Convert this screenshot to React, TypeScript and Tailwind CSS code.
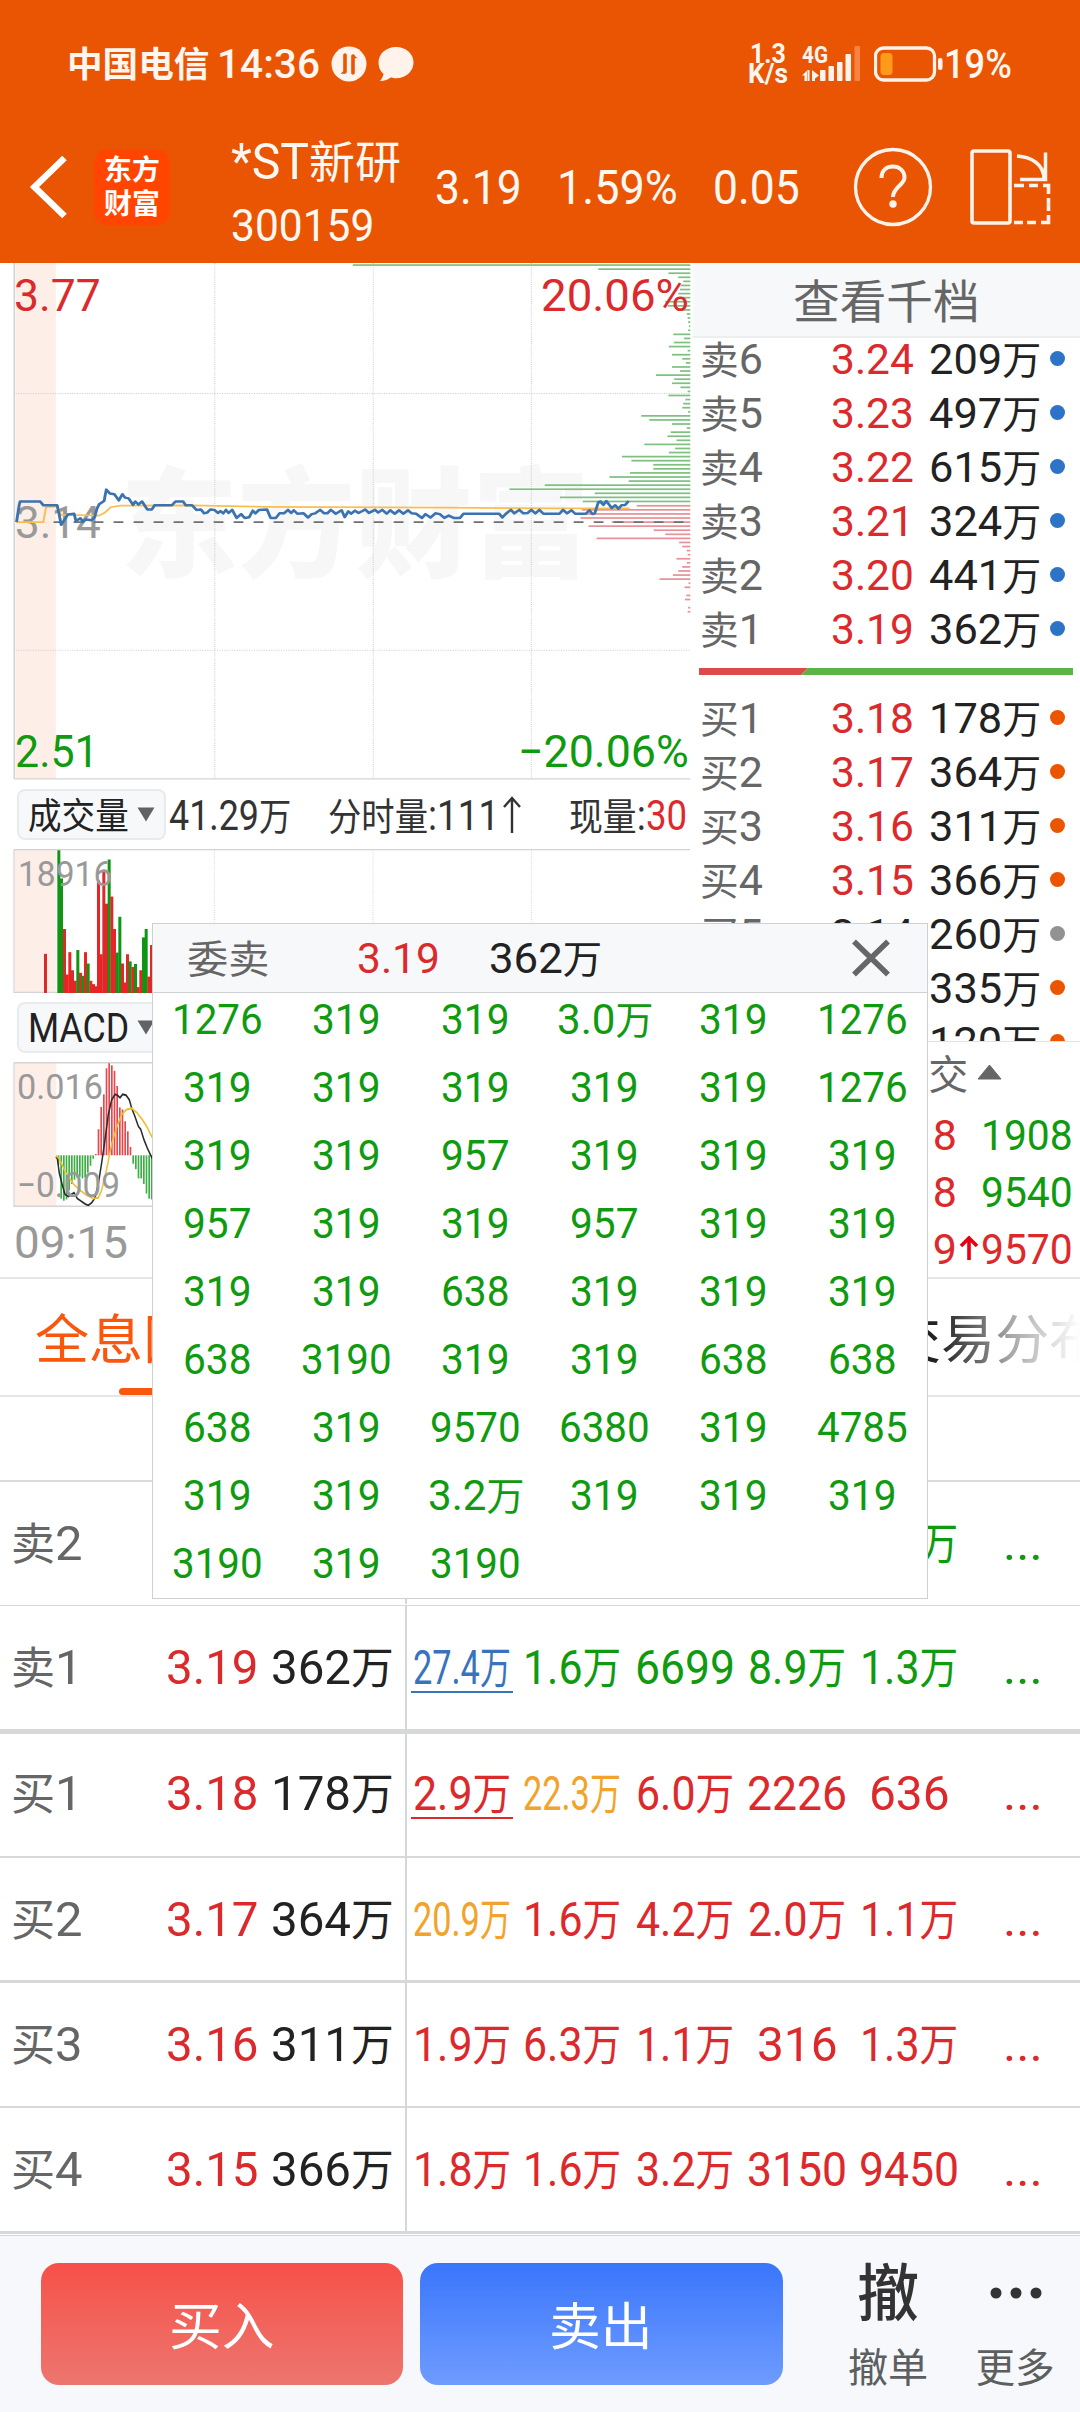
import React, { useLayoutEffect, useRef, useState } from "react";

/** Single-line text squeezed or stretched horizontally to fill exactly `w` pixels. */
function Fit({ w, text, className = "" }: { w: number; text: string; className?: string }) {
  const ref = useRef<HTMLSpanElement>(null);
  const [k, setK] = useState(1);
  useLayoutEffect(() => {
    const n = ref.current ? ref.current.offsetWidth : 0;
    if (n) setK(w / n);
  }, [w, text]);
  const parts = text.split(/([\u4e00-\u9fff]+)/).filter(Boolean);
  return (
    <span className={"inline-flex shrink-0 whitespace-nowrap " + className} style={{ width: w }}>
      <span ref={ref} className="inline-block shrink-0 origin-left" style={{ transform: `scaleX(${k})` }}>
        {parts.map((p, i) =>
          /[\u4e00-\u9fff]/.test(p) ? (
            <span key={i} className="text-[0.9em] leading-none">
              {p}
            </span>
          ) : (
            <span key={i}>{p}</span>
          )
        )}
      </span>
    </span>
  );
}

const RED = "text-[#dc2a2c]";
const GREEN = "text-[#0f9a10]";
const BLUE = "text-[#3873bd]";
const GOLD = "text-[#f2a32c]";
const INK = "text-[#222222]";
const GREY = "text-[#666666]";

function StatusBar() {
  return (
    <div className="flex h-[110px] items-center pt-[17px] pl-[67px] text-[#fff6f0]">
      <Fit w={142} text="中国电信" className="text-[39px] leading-[40px] font-bold" />
      <Fit w={103} text="14:36" className="ml-[8px] text-[41px] leading-[40px] font-medium" />
      <svg className="ml-[11px] h-[36px] w-[36px]" viewBox="0 0 36 36">
        <circle cx="18" cy="18" r="17.500" fill="#fff3ec" />
        <path d="M14 9v17M22 27V10" fill="none" stroke="#e95502" strokeWidth="3.600" strokeLinecap="round" />
        <path d="M14 27.800H9.500l4.500-4zM22 8.200l4.500 4H22z" fill="#e95502" />
      </svg>
      <svg className="ml-[11px] h-[36px] w-[36px]" viewBox="0 0 36 36">
        <path d="M18 1C8 1 .5 8 .5 16.500c0 5 2 9 5 11.500-.5 3-2 5-3.500 7 5 0 8-1.500 10.500-3.500 2 .6 3.500.8 5.500.8 10 0 17.500-7 17.500-15.800S28 1 18 1z" fill="#fff3ec" />
      </svg>
      <div className="ml-[333px] flex w-[42px] flex-col items-center text-[27px] leading-[20px] font-bold">
        <Fit w={36} text="1.3" />
        <Fit w={40} text="K/s" />
      </div>
      <svg className="ml-[13px] h-[40px] w-[60px]" viewBox="0 0 60 40">
        <text x="0" y="19" fontFamily="Roboto" fontWeight="700" fontSize="23" textLength="26" lengthAdjust="spacingAndGlyphs" fill="#fff3ec">
          4G
        </text>
        <path d="M0 31.500l5.500-5.500v11h-3v-5.500zM5 26v11h2.500v-11zM10 26l7 5.500-4 3V37h-3z" fill="#fff3ec" />
        <g fill="#fff3ec">
          <rect x="18" y="26" width="5.500" height="11" rx="1" />
          <rect x="26.500" y="22" width="5.500" height="15" rx="1" />
          <rect x="35" y="18" width="5.500" height="19" rx="1" />
          <rect x="43.500" y="10" width="5.500" height="27" rx="1" />
        </g>
        <rect x="52.500" y="2" width="5.500" height="35" rx="1" fill="#f58442" />
      </svg>
      <svg className="ml-[12px] h-[36px] w-[70px]" viewBox="0 0 70 36">
        <rect x="1.500" y="2" width="59" height="32" rx="8" fill="none" stroke="#fff3ec" strokeWidth="3.300" />
        <rect x="6.500" y="7" width="12" height="22" rx="3.500" fill="#ff9a1b" />
        <rect x="64" y="12" width="4.500" height="12" rx="2" fill="#fff3ec" />
      </svg>
      <Fit w={68} text="19%" className="text-[41px] leading-[40px] font-medium" />
    </div>
  );
}

function Header() {
  return (
    <header className="h-[263px] bg-[#e95502]">
      <StatusBar />
      <div className="flex h-[153px] items-center text-[#fff8f2]">
        <svg className="ml-[28px] h-[66px] w-[40px]" viewBox="0 0 40 66">
          <path d="M36.500 4L6.500 33l30 29" fill="none" stroke="#fff" strokeWidth="6.500" />
        </svg>
        <div className="ml-[26px] flex h-[76px] w-[76px] flex-col items-center justify-center rounded-[14px] bg-[#ff4500] text-[31px] leading-[34px] font-bold text-white">
          <Fit w={56} text="东方" />
          <Fit w={56} text="财富" />
        </div>
        <div className="ml-[61px] flex w-[190px] flex-col pt-[13px]">
          <div className="flex h-[60px] items-center pt-[8px]">
            <Fit w={78} text="*ST" className="text-[50px] leading-[60px]" />
            <Fit w={92} text="新研" className="text-[50px] leading-[60px]" />
          </div>
          <Fit w={143} text="300159" className="mt-[6px] text-[44px] leading-[64px]" />
        </div>
        <Fit w={87} text="3.19" className="ml-[14px] pt-[2px] text-[48px] leading-[60px]" />
        <Fit w={121} text="1.59%" className="ml-[35px] pt-[2px] text-[48px] leading-[60px]" />
        <Fit w={87} text="0.05" className="ml-[35px] pt-[2px] text-[48px] leading-[60px]" />
        <svg className="ml-[53px] h-[80px] w-[80px]" viewBox="0 0 80 80">
          <circle cx="40" cy="40" r="37.500" fill="none" stroke="#fff3ec" strokeWidth="3.300" />
          <path d="M28.500 31C28.500 23 34 19.500 40 19.500S51.500 23.500 51.500 30.500C51.500 38 40 40 40 50" fill="none" stroke="#fff3ec" strokeWidth="4" />
          <circle cx="40" cy="57" r="3.700" fill="#fff3ec" />
        </svg>
        <svg className="ml-[36px] h-[78px] w-[84px]" viewBox="0 0 84 78" fill="none" stroke="#fff3ec">
          <rect x="3" y="3" width="38" height="72" rx="2" strokeWidth="3.600" />
          <path d="M48 8c14 1 27 8 27 23" strokeWidth="3.500" />
          <path d="M76.500 4.500V31.500H51" strokeWidth="3.500" />
          <path d="M45 37.500h10M60 37.500h9M74 37.500h5.500V46M79.500 50v13M79.500 67v7.500H72M67 74.500h-9M54 74.500H45" strokeWidth="3.600" />
        </svg>
      </div>
    </header>
  );
}

const ASK_DEPTH = [
  790, 1340, 1497, 1519, 1530, 1525, 1523, 1519, 1525, 1490, 1495, 1527, 1538, 1540, 1541, 1543, 1541, 1508, 1532, 1509, 1498, 1540,
  1505, 1528, 1536, 1505, 1523, 1469, 1510, 1505, 1524, 1540, 1497, 1535, 1530, 1528, 1541, 1436, 1454, 1505, 1538, 1502, 1495, 1515,
  1443, 1512, 1498, 1393, 1414, 1463, 1463, 1411, 1365, 1408, 1220, 1141, 1332, 1254, 1305,
];
const BID_DEPTH = [
  1426, 1303, 1302, 1300, 1370, 1318, 1464, 1490, 1336, 1521, 1528, 1538, 1540, 1515, 1538, 1528, 1519, 1507, 1477, 1542, 1533, 1546,
  1537, 1534, 1546, 1541, 1540,
];
const PRICE_LINE =
  "37,685 43,640 45,631 90,631 97,641 128,641 132,662 137,692 145,678 152,665 166,663 170,682 180,675 186,684 192,678 205,680 212,672 217,650 222,638 233,630 238,600 246,610 256,612 266,628 274,612 280,621 288,623 298,640 303,631 310,639 318,631 330,652 340,652 346,641 385,641 393,631 410,631 416,641 430,641 440,653 450,652 457,662 464,660 471,652 480,653 488,661 494,656 500,662 506,653 512,661 520,653 530,674 540,664 548,674 558,672 566,655 572,662 580,653 598,652 606,674 618,674 626,662 636,662 645,653 652,661 658,654 666,663 680,662 690,673 698,664 706,662 717,653 726,662 733,662 741,653 752,663 765,654 772,672 780,657 786,663 795,655 803,661 818,652 826,661 840,653 847,660 856,653 866,663 874,654 884,663 894,654 903,663 914,654 922,662 932,663 945,674 953,664 964,673 975,662 985,664 995,674 1005,668 1016,674 1030,674 1038,663 1118,663 1125,673 1133,663 1144,653 1152,662 1163,653 1172,662 1182,661 1190,653 1199,662 1208,653 1217,663 1253,663 1261,653 1270,662 1280,654 1288,663 1312,663 1320,654 1327,664 1332,662 1340,633 1345,631 1351,640 1358,630 1370,648 1378,641 1385,650 1392,641 1400,640 1408,630";

function PriceChart() {
  return (
    <div className="relative h-[517px] w-[693px] text-[45px] leading-[48px]">
      <div className="absolute top-[193px] left-[120px] flex">
        <Fit w={470} text="东方财富" className="text-[133px] leading-[133px] font-black text-[#f7f7f8]" />
      </div>
      <svg className="absolute inset-0 h-full w-[693px]" viewBox="0 7.840 1552 1351" preserveAspectRatio="none">
        <rect x="35" y="8" width="90" height="1348" fill="#fdeee8" />
        <path d="M32 8V1356M32 1356H1546" stroke="#d3d3d5" strokeWidth="3.500" fill="none" />
        <path d="M481 8V1356M836 8V1356M1190 8V1356M35 349H1546M35 1020H1546" stroke="#cfcfcf" strokeWidth="2.500" strokeDasharray="2.500 3" fill="none" />
      </svg>
      <Fit w={86} text="3.14" className="absolute top-[236px] left-[15px] text-[#999999]" />
      <svg className="absolute inset-0 h-full w-[693px]" viewBox="0 7.840 1552 1351" preserveAspectRatio="none">
        {ASK_DEPTH.map((x, i) => (
          <rect key={i} x={x} y={11 + i * 10.650} width={1546 - x} height="4.500" fill="#7fc080" />
        ))}
        {BID_DEPTH.map((x, i) => (
          <rect key={i} x={x} y={640 + i * 10.650} width={1546 - x} height="4.500" fill="#e59298" />
        ))}
        <path d="M120 685H1546" stroke="#707073" strokeWidth="4" strokeDasharray="22 22.800" />
        <polyline points="37,685 97,685 103,646 128,644 137,666 200,667 222,668 235,660 248,646 270,642 430,641 600,645 1000,647 1250,649 1410,649" fill="none" stroke="#f7bf52" strokeWidth="4.500" />
        <polyline points={PRICE_LINE} fill="none" stroke="#3b72b0" strokeWidth="6.500" strokeLinejoin="round" />
      </svg>
      <Fit w={87} text="3.77" className={"absolute top-[9px] left-[14px] " + RED} />
      <Fit w={148} text="20.06%" className={"absolute top-[9px] left-[541px] " + RED} />
      <Fit w={84} text="2.51" className={"absolute top-[465px] left-[15px] " + GREEN} />
      <Fit w={171} text="−20.06%" className={"absolute top-[465px] left-[518px] " + GREEN} />
    </div>
  );
}

function IndicatorButton({ text, w }: { text: string; w: number }) {
  return (
    <div className="flex h-[51px] w-[149px] shrink-0 items-center rounded-[8px] border-2 border-[#e8eaee] bg-[#f7f8fa] text-[#222222]">
      <Fit w={w} text={text} className="ml-[9px] text-[41px] leading-[46px]" />
      <svg className="ml-[8px] h-[15px] w-[18px]" viewBox="0 0 18 15">
        <path d="M.5 .5h17L9 14.500z" fill="#606266" />
      </svg>
    </div>
  );
}

const VOLUME: [number, number, 0 | 1][] = [
  [132, 436, 1], [172, 190, 0], [180, 257, 0], [189, 377, 1], [197, 485, 1], [205, 432, 1], [213, 475, 1], [221, 500, 1],
  [229, 427, 0], [237, 481, 1], [245, 488, 0], [252, 432, 1], [260, 459, 0], [268, 500, 1], [276, 508, 1], [284, 513, 1],
  [291, 262, 1], [299, 437, 1], [307, 240, 1], [315, 317, 1], [323, 212, 0], [331, 300, 1], [339, 377, 1], [347, 433, 0],
  [355, 348, 0], [363, 459, 1], [370, 504, 1], [378, 437, 1], [386, 454, 0], [394, 467, 1], [402, 460, 0], [410, 515, 1],
  [418, 475, 1], [426, 397, 0], [434, 377, 0], [442, 490, 1], [450, 415, 1],
];

function VolumeChart() {
  return (
    <div className="relative h-[144px] w-[693px] text-[35px] leading-[40px]">
      <svg className="absolute inset-0 h-full w-[693px]" viewBox="0 187 2079 342" preserveAspectRatio="none">
        <rect x="44" y="188" width="125" height="340" fill="#fdeee8" />
        <path d="M42 188H2070M42 188V528H2070" stroke="#d3d3d5" strokeWidth="3.500" fill="none" />
        <path d="M643 188V528M1119 188V528M1594 188V528" stroke="#cfcfcf" strokeWidth="2.500" strokeDasharray="2.500 3" />
        {VOLUME.map(([x, y, up], i) => (
          <rect key={i} x={x} y={y} width="9" height={529 - y} fill={up ? (i % 3 ? "#ea2424" : "#d92b2b") : "#0f9414"} />
        ))}
      </svg>
      <Fit w={94} text="18916" className="absolute top-[6px] left-[18px] text-[#999999]" />
    </div>
  );
}

const MACD_BARS: [number, number][] = [
  [173, 940], [181, 1020], [189, 1025], [197, 1022], [205, 1000], [213, 985], [221, 975], [229, 970], [237, 968], [245, 972],
  [253, 970], [261, 958], [269, 942], [277, 925], [285, 914], [293, 855], [301, 802], [309, 772], [317, 710], [325, 698],
  [333, 703], [341, 716], [349, 752], [357, 803], [365, 808], [373, 836], [381, 860], [389, 897], [397, 937], [405, 950],
  [413, 972], [421, 972], [429, 985], [437, 1008], [445, 1020], [453, 1022],
];

function MacdChart() {
  return (
    <div className="relative h-[145px] w-[693px] text-[35px] leading-[40px]">
      <svg className="absolute inset-0 h-full w-[693px]" viewBox="0 695 2079 345" preserveAspectRatio="none">
        <rect x="44" y="697" width="125" height="341" fill="#fdeee8" />
        <path d="M42 697H2070M42 697V1038H2070" stroke="#d3d3d5" strokeWidth="3.500" fill="none" />
        {MACD_BARS.map(([x, y], i) => (
          <rect key={i} x={x} y={Math.min(y, 917)} width="5" height={Math.abs(917 - y)} fill={y < 917 ? "#e5484c" : "#3bb143"} />
        ))}
        <polyline points="168,920 172,925 178,960 186,985 195,1010 205,1015 222,1006 232,1020 245,1027 256,1033 265,1036 275,1030 285,1018 295,985 305,935 315,880 325,820 335,785 345,772 352,774 360,780 368,772 378,774 388,785 395,805 405,825 415,848 422,855 432,880 442,900 457,925" fill="none" stroke="#2c2c30" strokeWidth="4.500" />
        <polyline points="168,918 178,925 195,955 220,985 240,1000 260,1012 280,1020 295,1018 305,1000 320,950 335,890 350,850 365,820 380,808 395,805 410,815 425,830 440,848 457,875" fill="none" stroke="#eec02c" strokeWidth="4.500" />
      </svg>
      <Fit w={86} text="0.016" className="absolute top-[6px] left-[17px] text-[#999999]" />
      <Fit w={103} text="−0.009" className="absolute top-[104px] left-[17px] text-[#999999]" />
    </div>
  );
}

function Charts() {
  return (
    <section className="h-[1014px] w-[693px]">
      <PriceChart />
      <div className="flex h-[69px] items-center pl-[17px] text-[42px] leading-[50px] text-[#333333]">
        <IndicatorButton text="成交量" w={101} />
        <Fit w={122} text="41.29万" className="ml-[3px] pt-[2px]" />
        <Fit w={171} text="分时量:111" className="ml-[37px] pt-[2px]" />
        <svg className="ml-[3px] h-[40px] w-[20px]" viewBox="0 0 20 40">
          <path d="M10 38V3M2 12L10 3l8 9" fill="none" stroke="#333333" strokeWidth="2.400" />
        </svg>
        <Fit w={77} text="现量:" className="ml-[47px] pt-[2px]" />
        <Fit w={41} text="30" className={"pt-[2px] " + RED} />
      </div>
      <VolumeChart />
      <div className="flex h-[69px] items-center pl-[17px]">
        <IndicatorButton text="MACD" w={101} />
      </div>
      <MacdChart />
      <div className="flex h-[70px] items-center pt-[2px] pl-[14px]">
        <Fit w={114} text="09:15" className="text-[45px] leading-[50px] text-[#999999]" />
      </div>
    </section>
  );
}

type Quote = [string, string, string, "blue" | "orange" | "grey"];
const ASKS: Quote[] = [
  ["卖6", "3.24", "209万", "blue"],
  ["卖5", "3.23", "497万", "blue"],
  ["卖4", "3.22", "615万", "blue"],
  ["卖3", "3.21", "324万", "blue"],
  ["卖2", "3.20", "441万", "blue"],
  ["卖1", "3.19", "362万", "blue"],
];
const BIDS: Quote[] = [
  ["买1", "3.18", "178万", "orange"],
  ["买2", "3.17", "364万", "orange"],
  ["买3", "3.16", "311万", "orange"],
  ["买4", "3.15", "366万", "orange"],
  ["买5", "3.14", "260万", "grey"],
  ["买6", "3.13", "335万", "orange"],
  ["买7", "3.12", "120万", "orange"],
];
const DOTS = { blue: "bg-[#2e74c6]", orange: "bg-[#eb5500]", grey: "bg-[#929292]" };

function QuoteRow({ q }: { q: Quote }) {
  return (
    <div className="flex h-[54px] shrink-0 items-center pl-[7px] text-[43px] leading-[54px]">
      <Fit w={63} text={q[0]} className={GREY} />
      <Fit w={83} text={q[1]} className={"ml-[68px] " + (q[3] === "grey" ? INK : RED)} />
      <Fit w={112} text={q[2]} className={"ml-[15px] " + INK} />
      <span className={"mb-[2px] ml-[9px] h-[15px] w-[15px] rounded-full " + DOTS[q[3]]} />
    </div>
  );
}

function OrderBook() {
  const ticks = [
    ["3.18", "1908", false],
    ["3.18", "9540", false],
    ["3.19", "9570", true],
  ] as const;
  return (
    <section className="flex h-[1014px] w-[387px] flex-col">
      <div className="flex h-[75px] shrink-0 items-center justify-center border-b-2 border-[#eceef0] bg-[#f6f8fa] pt-[3px]">
        <Fit w={187} text="查看千档" className={"text-[51px] leading-[60px] " + GREY} />
      </div>
      <div className="flex h-[703px] shrink-0 flex-col overflow-hidden">
        <div className="mt-[-6px] flex flex-col">
          {ASKS.map((q) => (
            <QuoteRow key={q[0]} q={q} />
          ))}
        </div>
        <svg className="mt-[12px] mb-[16px] ml-[6px] h-[7px] w-[374px] shrink-0" viewBox="0 0 374 7">
          <path d="M0 0H109L102 7H0z" fill="#dc4a4a" />
          <path d="M109 0H374V7H102z" fill="#5bb447" />
        </svg>
        {BIDS.map((q) => (
          <QuoteRow key={q[0]} q={q} />
        ))}
      </div>
      <div className="flex h-[65px] shrink-0 items-center border-t border-[#e0e2e4] pl-[115px]">
        <Fit w={160} text="分笔成交" className={"text-[44px] leading-[54px] " + GREY} />
        <svg className="mb-[4px] ml-[9px] h-[16px] w-[25px]" viewBox="0 0 25 16">
          <path d="M12.500 1L24 15H1z" fill="#666" stroke="#666" strokeLinejoin="round" />
        </svg>
      </div>
      {ticks.map(([p, v, up], i) => (
        <div key={i} className="flex h-[57px] shrink-0 items-center pl-[180px] text-[43px] leading-[54px]">
          <Fit w={84} text={p} className={RED} />
          {up ? (
            <svg className="mb-[2px] ml-[2px] h-[26px] w-[20px]" viewBox="0 0 20 26">
              <path d="M10 25V4M2 11l8-8 8 8" fill="none" stroke="#e60012" strokeWidth="3.600" />
            </svg>
          ) : (
            <span className="w-[22px]" />
          )}
          <Fit w={92} text={v} className={up ? "ml-[2px] " + RED : "ml-[2px] " + GREEN} />
        </div>
      ))}
    </section>
  );
}

function Tabs() {
  return (
    <nav className="relative flex h-[120px] shrink-0 items-center justify-between overflow-hidden border-y-2 border-[#e4e6e8] pt-[3px] text-[59px] leading-[70px]">
      <Fit w={162} text="全息图" className="ml-[35px] text-[#f9560e]" />
      <Fit w={216} text="交易分布" className="mr-[-23px] text-[#222222]" />
      <span className="absolute bottom-0 left-[119px] h-[7px] w-[54px] rounded-full bg-[#f9560e]" />
      <span className="absolute inset-y-0 right-0 w-[140px] bg-linear-to-r from-white/0 via-white/60 to-white" />
    </nav>
  );
}

type Cell = [string, number, string, boolean?];
interface Level {
  label: string;
  price: string;
  vol: string;
  dots: string;
  cells: Cell[];
  box: string;
}
const LEVELS: Level[] = [
  {
    label: "卖2", price: "3.20", vol: "441万", dots: GREEN, box: "h-[124px] border-b pb-[1px]",
    cells: [["", 0, GREEN], ["", 0, GREEN], ["", 0, GREEN], ["", 0, GREEN], ["1.3万", 98, GREEN]],
  },
  {
    label: "卖1", price: "3.19", vol: "362万", dots: GREEN, box: "h-[128px] border-b-5 border-[#d3d8dc]",
    cells: [["27.4万", 98, BLUE, true], ["1.6万", 98, GREEN], ["6699", 100, GREEN], ["8.9万", 98, GREEN], ["1.3万", 98, GREEN]],
  },
  {
    label: "买1", price: "3.18", vol: "178万", dots: RED, box: "h-[124px] border-b-2",
    cells: [["2.9万", 98, RED, true], ["22.3万", 98, GOLD], ["6.0万", 98, RED], ["2226", 100, RED], ["636", 81, RED]],
  },
  {
    label: "买2", price: "3.17", vol: "364万", dots: RED, box: "h-[125px] border-b-3",
    cells: [["20.9万", 98, GOLD], ["1.6万", 98, RED], ["4.2万", 98, RED], ["2.0万", 98, RED], ["1.1万", 98, RED]],
  },
  {
    label: "买3", price: "3.16", vol: "311万", dots: RED, box: "h-[125px] border-b-2",
    cells: [["1.9万", 98, RED], ["6.3万", 98, RED], ["1.1万", 98, RED], ["316", 81, RED], ["1.3万", 98, RED]],
  },
  {
    label: "买4", price: "3.15", vol: "366万", dots: RED, box: "h-[126px] border-b-3",
    cells: [["1.8万", 98, RED], ["1.6万", 98, RED], ["3.2万", 98, RED], ["3150", 100, RED], ["9450", 100, RED]],
  },
];

function LevelRow({ level }: { level: Level }) {
  const pad = level.label === "买1" ? "pb-[3px]" : "pt-[1px]";
  return (
    <div className={"flex shrink-0 border-[#d6d8da] text-[49px] leading-[58px] " + level.box}>
      <div className={"flex w-[405px] items-center pl-[11px] " + pad}>
        <Fit w={72} text={level.label} className={GREY} />
        <Fit w={93} text={level.price} className={"ml-[83px] " + RED} />
        <Fit w={123} text={level.vol} className={"ml-[12px] " + INK} />
      </div>
      <div className={"grid flex-1 grid-cols-[109px_112px_113px_112px_112px_1fr] items-center justify-items-center border-l-2 border-[#d3d7db] " + pad}>
        {level.cells.map(([t, w, c, underlined], i) =>
          t ? (
            <span key={i} className={"relative flex " + c}>
              <Fit w={w} text={t} />
              {underlined && <span className="absolute bottom-[4px] left-[-2px] h-[2px] w-[102px] bg-current" />}
            </span>
          ) : (
            <span key={i} />
          )
        )}
        <Fit w={40} text="..." className={level.dots} />
      </div>
    </div>
  );
}

const ORDERS = [
  "1276", "319", "319", "3.0万", "319", "1276",
  "319", "319", "319", "319", "319", "1276",
  "319", "319", "957", "319", "319", "319",
  "957", "319", "319", "957", "319", "319",
  "319", "319", "638", "319", "319", "319",
  "638", "3190", "319", "319", "638", "638",
  "638", "319", "9570", "6380", "319", "4785",
  "319", "319", "3.2万", "319", "319", "319",
  "3190", "319", "3190",
];

function OrderPopup() {
  return (
    <div className="absolute top-[923px] left-[152px] h-[676px] w-[776px] border border-[#cdd0d4] bg-white">
      <div className="flex h-[69px] items-center border-b border-[#cfd2d5] bg-[#f6f8fa] pl-[34px] text-[43px] leading-[54px]">
        <Fit w={82} text="委卖" className={GREY} />
        <Fit w={83} text="3.19" className={"ml-[88px] " + RED} />
        <Fit w={113} text="362万" className={"ml-[49px] " + INK} />
        <svg className="ml-[250px] h-[38px] w-[38px]" viewBox="0 0 38 38">
          <path d="M2 2.500l34 33M36 2.500l-34 33" stroke="#666" strokeWidth="5.500" />
        </svg>
      </div>
      <div className="mt-[-8px] grid grid-cols-6 text-[43px] leading-[54px]">
        {ORDERS.map((t, i) => (
          <div key={i} className={"flex h-[68px] items-center justify-center " + GREEN}>
            <Fit w={t.length === 3 ? 69 : t.includes("万") ? 96 : 91} text={t} />
          </div>
        ))}
      </div>
    </div>
  );
}

function BottomBar() {
  return (
    <footer className="flex h-[177px] shrink-0 border-t border-[#d3d6d9] bg-[#f6f8fb] pt-[27px] text-[57px] leading-[70px] text-white">
      <button className="ml-[41px] flex h-[122px] w-[362px] items-center justify-center rounded-[18px] bg-linear-to-b from-[#f65049] to-[#ec756e] pt-[3px]">
        <Fit w={106} text="买入" />
      </button>
      <button className="ml-[17px] flex h-[122px] w-[363px] items-center justify-center rounded-[18px] bg-linear-to-b from-[#3a76fb] to-[#6e9bff] pt-[3px] pr-[2px]">
        <Fit w={104} text="卖出" />
      </button>
      <div className="ml-[65px] flex w-[80px] flex-col items-center">
        <Fit w={62} text="撤" className="h-[58px] text-[69px] leading-[60px] font-medium text-[#333333]" />
        <Fit w={80} text="撤单" className="mt-[19px] text-[44px] leading-[54px] text-[#5c5e60]" />
      </div>
      <div className="ml-[47px] flex w-[80px] flex-col items-center">
        <svg className="h-[58px] w-[56px]" viewBox="0 0 56 58" fill="#333">
          <circle cx="9" cy="30" r="5.500" />
          <circle cx="29" cy="30" r="5.500" />
          <circle cx="49" cy="30" r="5.500" />
        </svg>
        <Fit w={79} text="更多" className="mt-[19px] text-[44px] leading-[54px] text-[#5c5e60]" />
      </div>
    </footer>
  );
}

export default function App() {
  return (
    <main className="relative flex h-[2412px] w-[1080px] flex-col overflow-hidden bg-white font-['Roboto','Noto_Sans_CJK_SC',sans-serif] font-normal">
      <Header />
      <div className="flex">
        <Charts />
        <OrderBook />
      </div>
      <Tabs />
      <div className="h-[85px] shrink-0 border-b-2 border-[#d9dbdd]" />
      {LEVELS.map((l) => (
        <LevelRow key={l.label} level={l} />
      ))}
      <div className="h-px shrink-0" />
      <BottomBar />
      <OrderPopup />
    </main>
  );
}
